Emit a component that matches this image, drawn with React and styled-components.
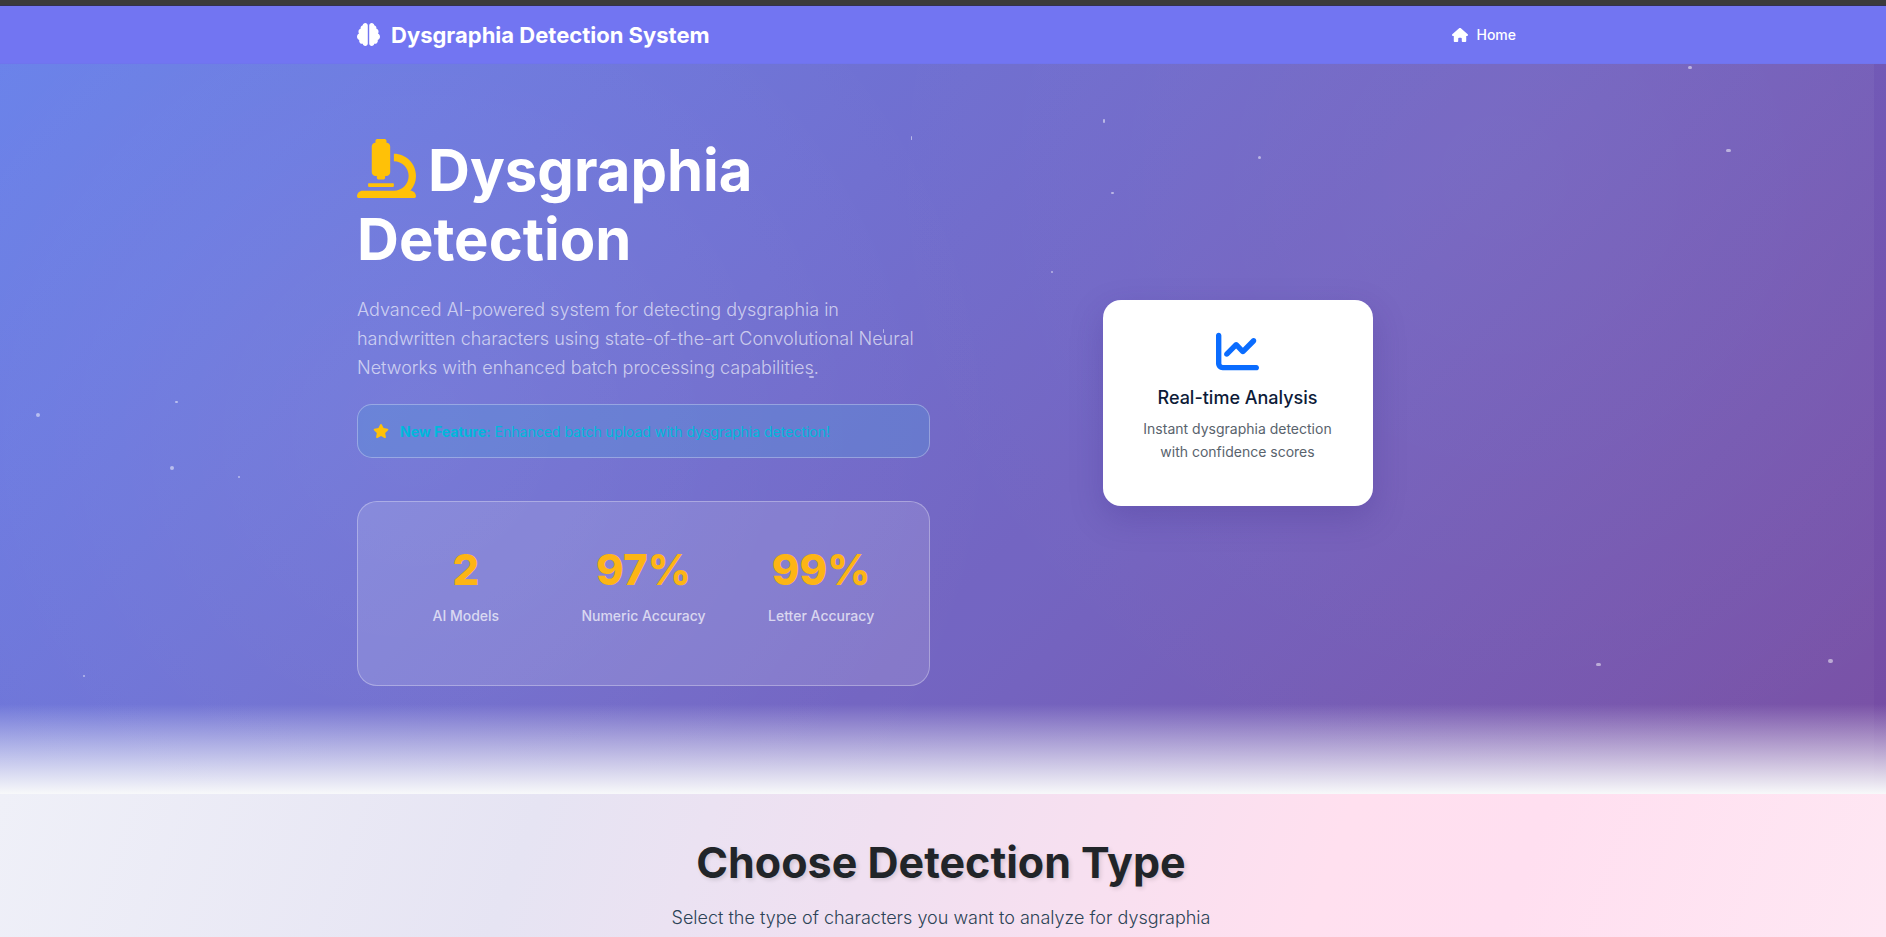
import React from 'react';
import styled, { createGlobalStyle } from 'styled-components';
import { FaMicroscope } from 'react-icons/fa';
import { FaBrain, FaChartLine, FaHouse, FaStar } from 'react-icons/fa6';

const GlobalStyle = createGlobalStyle`
  * {
    box-sizing: border-box;
  }

  body {
    margin: 0;
    font-family: Inter, 'Noto Sans', sans-serif;
    color: #212529;
  }

  h1, h2, h3, p {
    margin: 0;
  }
`;

const Page = styled.div`
  min-height: 100vh;
  border-top: 5px solid #3b3b3b;
`;

const Container = styled.div`
  width: 100%;
  max-width: 1196px;
  margin: 0 auto;
  padding: 0 12px;
`;

const Navbar = styled.nav`
  background: #7275f2;
  border-top: 1px solid #33324f;
  border-bottom: 1px solid #7074ee;
`;

const NavInner = styled(Container)`
  display: flex;
  align-items: center;
  justify-content: space-between;
  height: 57px;
`;

const Brand = styled.a`
  display: inline-flex;
  align-items: center;
  gap: 11px;
  color: #fff;
  font-size: 22px;
  font-weight: 700;
  text-decoration: none;
`;

const NavLink = styled.a`
  display: inline-flex;
  align-items: center;
  gap: 8px;
  padding-right: 13px;
  color: #fff;
  font-size: 14px;
  font-weight: 500;
  text-decoration: none;
`;

const Hero = styled.header`
  position: relative;
  padding: 72px 0 108px;
  background: linear-gradient(135deg, #667eea 0%, #764ba2 100%);
  overflow: hidden;
`;

const Haze = styled.div`
  position: absolute;
  inset: 0 12px 0 0;
  background: radial-gradient(circle at 22% 50%, rgba(255, 255, 255, 0.06), transparent 40%),
    radial-gradient(circle at 80% 15%, rgba(255, 255, 255, 0.04), transparent 40%),
    rgba(255, 255, 255, 0.03);
`;

const Fade = styled.div`
  position: absolute;
  left: 0;
  right: 0;
  bottom: 0;
  height: 90px;
  background: linear-gradient(to top, #f8f9fa, rgba(248, 249, 250, 0));
`;

const Particle = styled.span`
  position: absolute;
  width: ${props => props.$w}px;
  height: ${props => props.$h}px;
  border-radius: 2px;
  background: rgba(255, 255, 255, 0.5);
`;

const HeroInner = styled(Container)`
  position: relative;
  display: grid;
  grid-template-columns: 1fr 1fr;
  gap: 26px;
`;

const HeroTitle = styled.h1`
  color: #fff;
  font-size: 58px;
  line-height: 69px;
  font-weight: 700;

  svg {
    margin-right: 12px;
    color: #ffc107;
    vertical-align: -7px;
  }
`;

const Lead = styled.p`
  margin-top: 21px;
  color: rgba(255, 255, 255, 0.65);
  font-size: 18px;
  line-height: 29px;
  font-weight: 300;
`;

const Notice = styled.div`
  display: flex;
  align-items: center;
  gap: 11px;
  margin-top: 22px;
  height: 54px;
  padding: 0 15px;
  border: 1px solid rgba(255, 255, 255, 0.3);
  border-radius: 15px;
  background: rgba(90, 146, 216, 0.4);
  color: #00b8dc;
  font-size: 14px;
  font-weight: 400;

  svg {
    color: #ffc107;
  }

  strong {
    font-weight: 700;
  }
`;

const Stats = styled.div`
  display: grid;
  grid-template-columns: repeat(3, 1fr);
  margin-top: 43px;
  padding: 40px 19px 59px;
  border: 1px solid rgba(255, 255, 255, 0.3);
  border-radius: 20px;
  background: rgba(255, 255, 255, 0.13);
  text-align: center;
`;

const StatValue = styled.div`
  color: #fdb515;
  font-size: 42px;
  line-height: 56px;
  font-weight: 800;
`;

const StatLabel = styled.div`
  margin-top: 7px;
  color: rgba(255, 255, 255, 0.7);
  font-size: 14px;
  line-height: 21px;
  font-weight: 500;
`;

const HeroVisual = styled.div`
  display: flex;
  align-items: center;
  justify-content: center;
  padding-right: 10px;
`;

const FeatureCard = styled.div`
  width: 270px;
  margin-bottom: 16px;
  padding: 30px 30px 43px;
  border-radius: 18px;
  background: #fff;
  box-shadow: 0 12px 32px rgba(60, 40, 130, 0.25);
  text-align: center;

  svg {
    display: block;
    margin: 0 auto;
    color: #0a6cff;
  }

  h3 {
    margin-top: 14px;
    color: #0d1b38;
    font-size: 18px;
    line-height: 22px;
    font-weight: 500;
  }

  p {
    margin-top: 8px;
    color: #59636d;
    font-size: 14px;
    line-height: 23px;
  }
`;

const Choose = styled.section`
  padding: 42px 4px 5px 0;
  background: linear-gradient(110deg, #eff0f8 0%, #e6e4f3 28%, #f0e0f1 46%, #ffe0ef 70%, #ffdff0 80%, #fee7f3 100%);
  text-align: center;

  h2 {
    font-size: 43px;
    line-height: 53px;
    font-weight: 700;
    text-shadow: 2px 2px 4px rgba(0, 0, 0, 0.12);
  }

  p {
    margin-top: 14px;
    color: #2c4356;
    font-size: 18px;
    line-height: 29px;
    font-weight: 300;
  }
`;

// x and y are percentages of the hero
const particles = [
  { x: 89.5, y: 0.3, w: 4, h: 3 },
  { x: 58.5, y: 7.5, w: 2, h: 4 },
  { x: 66.7, y: 12.6, w: 3, h: 3 },
  { x: 91.5, y: 11.6, w: 5, h: 3 },
  { x: 58.9, y: 17.6, w: 3, h: 2 },
  { x: 55.7, y: 28.3, w: 2, h: 2 },
  { x: 48.3, y: 9.8, w: 1, h: 4 },
  { x: 46.8, y: 36.3, w: 1, h: 4 },
  { x: 42.9, y: 42.8, w: 5, h: 2 },
  { x: 1.9, y: 47.8, w: 4, h: 4 },
  { x: 9.3, y: 46.1, w: 3, h: 2 },
  { x: 9, y: 55.1, w: 4, h: 4 },
  { x: 12.6, y: 56.4, w: 2, h: 2 },
  { x: 4.4, y: 83.7, w: 2, h: 2 },
  { x: 84.6, y: 82.1, w: 5, h: 3 },
  { x: 96.9, y: 81.5, w: 5, h: 4 },
];

const stats = [
  { value: '2', label: 'AI Models' },
  { value: '97%', label: 'Numeric Accuracy' },
  { value: '99%', label: 'Letter Accuracy' },
];

const App = () => {
  return (
    <Page>
      <GlobalStyle />
      <Navbar>
        <NavInner>
          <Brand href="#">
            <FaBrain size={23} />
            Dysgraphia Detection System
          </Brand>
          <NavLink href="#">
            <FaHouse size={16} />
            Home
          </NavLink>
        </NavInner>
      </Navbar>

      <Hero>
        <Haze />
        {particles.map(p => (
          <Particle
            key={`${p.x}-${p.y}`}
            $w={p.w}
            $h={p.h}
            style={{ left: `${p.x}%`, top: `${p.y}%` }}
          />
        ))}
        <Fade />
        <HeroInner>
          <div>
            <HeroTitle>
              <FaMicroscope size={59} />
              Dysgraphia Detection
            </HeroTitle>
            <Lead>
              Advanced AI-powered system for detecting dysgraphia in handwritten characters using
              state-of-the-art Convolutional Neural Networks with enhanced batch processing
              capabilities.
            </Lead>
            <Notice>
              <FaStar size={16} />
              <span>
                <strong>New Feature:</strong> Enhanced batch upload with dysgraphia detection!
              </span>
            </Notice>
            <Stats>
              {stats.map(s => (
                <div key={s.label}>
                  <StatValue>{s.value}</StatValue>
                  <StatLabel>{s.label}</StatLabel>
                </div>
              ))}
            </Stats>
          </div>
          <HeroVisual>
            <FeatureCard>
              <FaChartLine size={43} />
              <h3>Real-time Analysis</h3>
              <p>Instant dysgraphia detection with confidence scores</p>
            </FeatureCard>
          </HeroVisual>
        </HeroInner>
      </Hero>

      <Choose>
        <h2>Choose Detection Type</h2>
        <p>Select the type of characters you want to analyze for dysgraphia</p>
      </Choose>
    </Page>
  );
};

export default App;
